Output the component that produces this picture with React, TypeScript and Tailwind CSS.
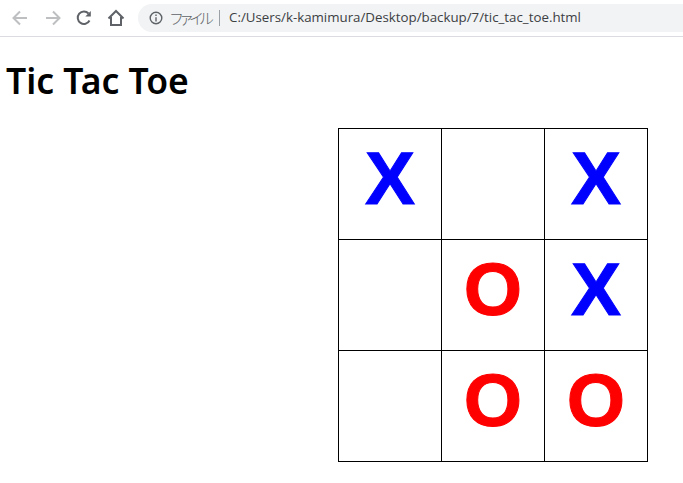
const board = ['X', '', 'X', '', 'O', 'X', '', 'O', 'O'];

function Toolbar() {
  return (
    <div className="flex h-[37px] items-center border-b border-[#dadce0] bg-white pl-[11px]">
      <svg width="18" height="18" viewBox="0 0 18 18" fill="none" stroke="#bdbfc1" strokeWidth="2">
        <path d="M16 9H3M9 2.500 2.500 9 9 15.500" />
      </svg>
      <svg className="ml-[15px]" width="18" height="18" viewBox="0 0 18 18" fill="none" stroke="#bdbfc1" strokeWidth="2">
        <path d="M2 9h13M9 2.500 15.500 9 9 15.500" />
      </svg>
      <svg className="ml-[13px]" width="18" height="18" viewBox="0 0 18 18" fill="none" stroke="#5f6368" strokeWidth="2">
        <path d="M14.500 11.500A6.200 6.200 0 1 1 13.500 4.500" />
        <path d="M15.800 2v5.500h-5.500z" fill="#5f6368" stroke="none" />
      </svg>
      <svg className="ml-[14px]" width="18" height="18" viewBox="0 0 18 18" fill="none" stroke="#5f6368" strokeWidth="2">
        <path d="M1.500 9.500 9 2l7.500 7.500M4 8v8h10V8" />
      </svg>
      <div className="ml-[13px] flex h-[28px] flex-1 items-center rounded-l-[14px] bg-[#f1f3f4] pl-[11px] font-['Open_Sans','Noto_Sans_CJK_JP',sans-serif] text-[13.300px] text-[#3c4043]">
        <svg width="14" height="14" viewBox="0 0 14 14" fill="none" stroke="#5f6368" strokeWidth="1.400">
          <circle cx="7" cy="7" r="5.800" />
          <path d="M7 6.200V10.500M7 3.500v1.500" />
        </svg>
        <span className="ml-[6px] font-['Noto_Sans_CJK_JP',sans-serif] text-[15px] font-light tracking-[-5px] text-[#5f6368]">ファイル</span>
        <span className="ml-[10px] h-[16px] w-px bg-[#9aa0a6]" />
        <span className="ml-[9px] whitespace-nowrap">C:/Users/k-kamimura/Desktop/backup/7/tic_tac_toe.html</span>
      </div>
    </div>
  );
}

export default function App() {
  return (
    <div className="h-[483px] w-[683px] overflow-hidden bg-white font-['Liberation_Sans',sans-serif]">
      <Toolbar />
      <h1 className="mt-[20px] ml-[6px] font-['Noto_Sans',sans-serif] text-[35.500px] leading-[47px] font-semibold text-black">Tic Tac Toe</h1>
      <div className="mt-[24px] ml-[338px] grid w-[310px] grid-cols-[repeat(3,103px)] grid-rows-[repeat(3,111px)] border-t border-l border-black">
        {board.map((mark, i) => (
          <div
            key={i}
            className={`flex items-center justify-center border-r border-b border-black pb-[12px] text-[75px] leading-none font-bold [-webkit-text-stroke:1px_currentColor] ${mark === 'X' ? 'text-[#0000ff]' : 'text-[#ff0000]'}`}
          >
            {mark}
          </div>
        ))}
      </div>
    </div>
  );
}
